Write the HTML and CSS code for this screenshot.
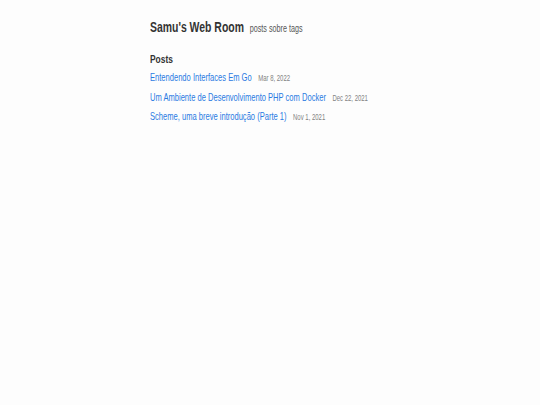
FILE: index.html
```html
<!DOCTYPE html>
<html lang="pt">
<head>
<meta charset="utf-8">
<title>Samu's Web Room</title>
<link rel="stylesheet" href="styles.css">
</head>
<body>
<div class="wrapper">
  <header class="site-header">
    <a class="site-title" href="#">Samu's Web Room</a>
    <nav class="site-nav">
      <a href="#">posts</a>
      <a href="#">sobre</a>
      <a href="#">tags</a>
    </nav>
  </header>
  <main class="content">
    <h2 class="post-list-heading">Posts</h2>
    <ul class="post-list">
      <li><a class="post-link" href="#">Entendendo Interfaces Em Go</a><span class="post-meta">Mar 8, 2022</span></li>
      <li><a class="post-link" href="#">Um Ambiente de Desenvolvimento PHP com Docker</a><span class="post-meta">Dec 22, 2021</span></li>
      <li><a class="post-link" href="#">Scheme, uma breve introdução (Parte 1)</a><span class="post-meta">Nov 1, 2021</span></li>
    </ul>
  </main>
</div>
</body>
</html>
```
FILE: styles.css
```css
html, body {
  margin: 0;
  padding: 0;
}
body {
  background: #fdfdfd;
  color: #111;
  font-family: "Liberation Sans", Arial, Helvetica, sans-serif;
}
a {
  text-decoration: none;
}
.wrapper {
  width: 240px;
  margin: 0 auto;
  padding-top: 20px;
  white-space: nowrap;
  transform: scaleX(0.72);
  transform-origin: left top;
}
.site-header {
  display: flex;
  align-items: baseline;
  gap: 8px;
  line-height: 1;
}
.site-title {
  font-size: 14.5px;
  font-weight: bold;
  color: #333;
}
.site-nav {
  display: flex;
  gap: 2.8px;
}
.site-nav a {
  font-size: 10px;
  color: #555;
}
.content {
  padding-top: 18px;
}
.post-list-heading {
  margin: 0 0 4px;
  font-size: 11.7px;
  line-height: 1;
  font-weight: bold;
  color: #333;
}
.post-list {
  list-style: none;
  margin: 0;
  padding: 0;
}
.post-list li {
  display: flex;
  align-items: baseline;
  gap: 9px;
  height: 19.5px;
  line-height: 19.5px;
}
.post-link {
  font-size: 10.5px;
  color: #2a7ae2;
}
.post-meta {
  font-size: 8.3px;
  color: #828282;
}
```
